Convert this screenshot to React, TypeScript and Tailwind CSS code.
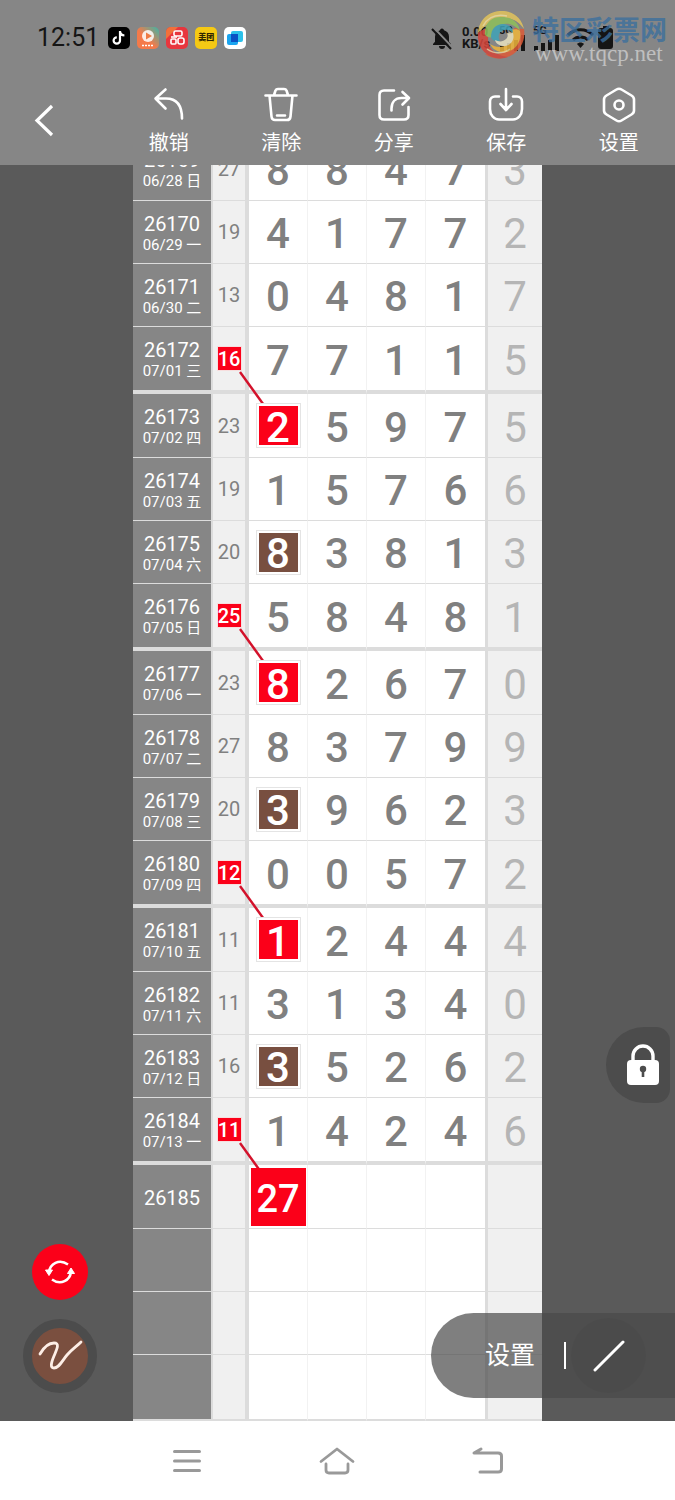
import type { ReactNode } from 'react';
import clsx from 'clsx';

interface Draw {
    issue: string;
    date?: string;
    sum?: number;
    digits: string;
    tail?: string;
    sumMarked?: boolean;
    mark?: 'red' | 'brown' | 'pick';
}

const draws: Draw[] = [
    { issue: '26169', date: '06/28 日', sum: 27, digits: '8847', tail: '3' },
    { issue: '26170', date: '06/29 一', sum: 19, digits: '4177', tail: '2' },
    { issue: '26171', date: '06/30 二', sum: 13, digits: '0481', tail: '7' },
    { issue: '26172', date: '07/01 三', sum: 16, digits: '7711', tail: '5', sumMarked: true },
    { issue: '26173', date: '07/02 四', sum: 23, digits: '2597', tail: '5', mark: 'red' },
    { issue: '26174', date: '07/03 五', sum: 19, digits: '1576', tail: '6' },
    { issue: '26175', date: '07/04 六', sum: 20, digits: '8381', tail: '3', mark: 'brown' },
    { issue: '26176', date: '07/05 日', sum: 25, digits: '5848', tail: '1', sumMarked: true },
    { issue: '26177', date: '07/06 一', sum: 23, digits: '8267', tail: '0', mark: 'red' },
    { issue: '26178', date: '07/07 二', sum: 27, digits: '8379', tail: '9' },
    { issue: '26179', date: '07/08 三', sum: 20, digits: '3962', tail: '3', mark: 'brown' },
    { issue: '26180', date: '07/09 四', sum: 12, digits: '0057', tail: '2', sumMarked: true },
    { issue: '26181', date: '07/10 五', sum: 11, digits: '1244', tail: '4', mark: 'red' },
    { issue: '26182', date: '07/11 六', sum: 11, digits: '3134', tail: '0' },
    { issue: '26183', date: '07/12 日', sum: 16, digits: '3526', tail: '2', mark: 'brown' },
    { issue: '26184', date: '07/13 一', sum: 11, digits: '1424', tail: '6', sumMarked: true },
    { issue: '26185', digits: '', mark: 'pick' },
    { issue: '', digits: '' },
    { issue: '', digits: '' },
    { issue: '', digits: '' },
];

const Signal = () => (
    <div className="relative h-[26px] w-[27px]">
        <span className="absolute left-0 top-0 text-[11px] leading-3 font-bold">5G</span>
        <svg className="absolute bottom-0 left-0" width="27" height="16" viewBox="0 0 27 16" fill="currentColor">
            <rect x="1" y="11" width="4" height="5" />
            <rect x="8" y="8" width="4" height="8" />
            <rect x="15" y="5" width="4" height="11" />
            <rect x="22" y="0" width="4" height="16" />
        </svg>
    </div>
);

const AppBadges = () => (
    <div className="ml-[9px] flex gap-[7px]">
        <svg width="22" height="22" viewBox="0 0 22 22">
            <rect width="22" height="22" rx="5" fill="#000" />
            <path d="M12 4v9.500a3.200 3.200 0 1 1-3.200-3.200M12 4.500c.4 2.500 2 3.800 4.400 4" fill="none" stroke="#fff" strokeWidth="2.200" />
        </svg>
        <svg width="22" height="22" viewBox="0 0 22 22">
            <defs>
                <linearGradient id="video" x1="0" y1="1" x2="1" y2="0">
                    <stop offset=".45" stopColor="#f47a4a" />
                    <stop offset="1" stopColor="#3bb6a8" />
                </linearGradient>
            </defs>
            <rect width="22" height="22" rx="5" fill="url(#video)" />
            <circle cx="11" cy="9" r="6" fill="#fff" opacity=".85" />
            <path d="M9 5.500l6 3.500-6 3.500z" fill="#ee7b45" />
            <path d="M5 18.500h12" stroke="#fff" strokeWidth="1.500" strokeDasharray="2 1" />
        </svg>
        <svg width="22" height="22" viewBox="0 0 22 22">
            <rect width="22" height="22" rx="5" fill="#e8363e" />
            <path d="M0 12V5a5 5 0 0 1 5-5h7z" fill="#f2703a" />
            <g fill="none" stroke="#fff" strokeWidth="1.600">
                <rect x="8" y="4" width="8" height="5" rx="1.500" />
                <rect x="5" y="12" width="5" height="5" rx="1" />
                <rect x="12" y="11" width="6" height="6" rx="2" />
                <path d="M5 10h6" />
            </g>
        </svg>
        <div className="flex h-[22px] w-[22px] items-center justify-center rounded-[5px] bg-[#f5c914] text-[8px] leading-none font-black text-[#302600]">美团</div>
        <svg width="22" height="22" viewBox="0 0 22 22">
            <rect width="22" height="22" rx="5" fill="#fff" />
            <rect x="7" y="4" width="12" height="11" rx="2" fill="#2bc1ea" />
            <rect x="3" y="7" width="11" height="11" rx="2" fill="#1aa5f0" />
            <rect x="7" y="7" width="7" height="8" fill="#0a52c4" />
        </svg>
    </div>
);

const Watermark = () => (
    <div className="pointer-events-none absolute top-[9px] left-[475px] flex">
        <svg width="52" height="52" viewBox="0 0 52 52" fill="none" opacity=".85">
            <path d="M3 24C4 10 14 2 27 2c12 0 20 8 22 18-6-9-14-12-23-10C15 11 10 17 3 24z" fill="#e2c45c" />
            <path d="M49 20c2 12-4 22-14 27-9 4-18 3-25-2 10 1 20 0 26-7 5-6 5-12 3-19z" fill="#dd5b38" />
            <path d="M3 24c-1 11 4 19 12 23 6 3 13 3 18 1-9-1-16-5-19-12-2-6-1-12 3-18C11 19 6 21 3 24z" fill="#d4453a" />
            <path d="M10 26C9 14 17 7 27 8c10 0 17 6 18 14-6-7-13-9-20-6-5 2-7 7-7 12-3 1-6 0-8-2z" fill="#8fc05a" />
            <path d="M45 22c2 10-4 19-13 21-8 1-14-2-17-8 6 4 13 4 18 0s5-9 3-14c4-1 7-1 9 1z" fill="#efb53c" />
            <path d="M16 28c0-8 5-13 12-13 6 0 10 4 10 9-4-4-8-4-11-2-4 2-4 7-2 10-4 1-8 0-9-4z" fill="#3fa3b8" />
            <path d="M38 24c2 7-2 12-8 13-5 0-9-2-10-6 4 2 8 2 11-1 2-2 2-4 1-6 2-1 4-1 6 0z" fill="#e9e2c0" />
            <path d="M8 17C13 8 22 5 32 7M12 40c7 5 16 5 23 0" stroke="#f3e4b0" strokeWidth="1.500" opacity=".8" />
        </svg>
        <div className="ml-[5px] pt-[5px]">
            <div className="text-[27px] leading-[34px] font-bold text-[#3b6f9e]/80">特区彩票网</div>
            <div className="-mt-[4px] pl-[3px] font-['Liberation_Serif',serif] text-[23px] leading-5 text-[#cfcfcf]/80">www.tqcp.net</div>
        </div>
    </div>
);

const StatusBar = () => (
    <div className="flex h-[75px] items-center pr-[62px] pl-[37px] text-[#151515]">
        <span className="text-[25px]">12:51</span>
        <AppBadges />
        <div className="ml-auto flex items-center">
            <svg width="24" height="24" viewBox="0 0 24 24">
                <path d="M12 2.500a2 2 0 0 1 2 1.700c3 .8 5 3.300 5 6.500v5l2 2.300v1H3v-1l2-2.300v-5c0-3.200 2-5.700 5-6.500a2 2 0 0 1 2-1.700zM9 20h6a3 3 0 0 1-6 0z" fill="currentColor" />
                <path d="M3.500 1.500l19 20" stroke="#868686" strokeWidth="2" />
                <path d="M2 3l19 20" stroke="currentColor" strokeWidth="2" />
            </svg>
            <div className="ml-[8px] w-[37px] text-[13px] leading-3 font-bold">
                <div>0.00</div>
                <div>KB/s</div>
            </div>
            <Signal />
            <div className="ml-[7px]">
                <Signal />
            </div>
            <svg className="ml-[6px]" width="29" height="24" viewBox="0 0 29 24" fill="none" stroke="currentColor" strokeWidth="3">
                <path d="M2 9c7-7 18-7 25 0M7 14c4-4 11-4 15 0" />
                <path d="M11 18c2-2 5-2 7 0l-3.500 4z" fill="currentColor" stroke="none" />
            </svg>
            <svg className="ml-[3px]" width="15" height="24" viewBox="0 0 15 24" fill="currentColor">
                <path d="M5 0h6v2h1a3 3 0 0 1 3 3v15a3 3 0 0 1-3 3H3a3 3 0 0 1-3-3V5a3 3 0 0 1 3-3h2z" />
            </svg>
        </div>
    </div>
);

const ToolButton = ({ label, children }: { label: string; children: ReactNode }) => (
    <button className="flex flex-col items-center pt-[11px] text-white">
        <svg width="38" height="38" viewBox="0 0 38 38" fill="none" stroke="currentColor" strokeWidth="2.600" strokeLinecap="round" strokeLinejoin="round">
            {children}
        </svg>
        <span className="mt-[7px] text-[20px] leading-6">{label}</span>
    </button>
);

const Toolbar = () => (
    <div className="grid h-[90px] grid-cols-6">
        <button aria-label="返回" className="flex items-center pl-[34px] text-white">
            <svg width="22" height="34" viewBox="0 0 22 34" fill="none" stroke="currentColor" strokeWidth="3.200">
                <path d="M18 3L3 17.500 18 32" />
            </svg>
        </button>
        <ToolButton label="撤销">
            <path d="M15.500 3.500L5.500 12.500l10 10M6 12.500h10c10 0 16 6 16 20" />
        </ToolButton>
        <ToolButton label="清除">
            <path d="M3.500 9.500h31M7.500 9.500l2 21c.2 2 1.300 3.500 3.500 3.500h12c2.200 0 3.300-1.500 3.500-3.500l2-21M12 9l1.500-4.500C14 3.300 14.700 3 16 3h6c1.300 0 2 .3 2.500 1.500L26 9M15 29.500h8" />
        </ToolButton>
        <ToolButton label="分享">
            <path d="M19 4.500H9c-3 0-4.500 1.500-4.500 4.500v20c0 3 1.500 4.500 4.500 4.500h20c3 0 4.500-1.500 4.500-4.500v-8M16.500 24.500v-2c0-6 3.500-10.500 10-10.500h7M27.500 6l6.500 6-6.500 6.500" />
        </ToolButton>
        <ToolButton label="保存">
            <path d="M19 3v20M13.500 18l5.500 6 5.500-6M12 10.500H8c-3 0-5 2-5 5V23c0 6 4 10.500 9 10.500h14c5 0 9-4.500 9-10.500v-7.500c0-3-2-5-5-5h-4" />
        </ToolButton>
        <ToolButton label="设置">
            <path d="M16.500 3.500c1.700-1 3.300-1 5 0l10 6c1.700 1 2.500 2.300 2.500 4v11c0 1.700-.8 3-2.500 4l-10 6c-1.700 1-3.300 1-5 0l-10-6C4.800 27.500 4 26.200 4 24.500v-11c0-1.700.8-3 2.500-4z" />
            <circle cx="19" cy="19" r="4.500" />
        </ToolButton>
    </div>
);

const Mark = ({ type, digit }: { type?: Draw['mark']; digit: string }) => {
    if (!type) return <div className="pt-1">{digit}</div>;
    if (type === 'pick') {
        return (
            <span className="relative z-20 mx-auto flex h-[58px] w-[55px] items-center justify-center bg-[#fb0019] pt-1 text-[38px] text-white">27</span>
        );
    }
    return (
        <span className="relative z-20 mx-auto block w-[45px] border border-[#e4e4e4] bg-white p-[2px]">
            <span className={clsx('flex h-[39px] items-center justify-center pt-1 text-white', type === 'red' ? 'bg-[#fb0019]' : 'bg-[#784f40]')}>
                {digit}
            </span>
        </span>
    );
};

const TrendTable = () => (
    <table className="-mt-7 w-full table-fixed border-separate border-spacing-0 text-center text-[#808080]">
        <colgroup>
            <col className="w-[80px]" />
            <col className="w-[36px]" />
            <col span={4} />
            <col className="w-[57px]" />
        </colgroup>
        <tbody>
            {draws.map((row, i) => {
                const isLast = i === draws.length - 1;
                const groupEnd = i % 4 === 3;
                const line = clsx('border-[#dcdcdc]', isLast ? 'border-b-2' : groupEnd ? 'border-b-4' : 'border-b');
                const height = isLast ? 'h-[66px]' : groupEnd ? 'h-[67px]' : i % 4 === 0 ? 'h-[64px]' : 'h-[63px]';
                return (
                    <tr key={i}>
                        <th className={clsx('border-r-2 bg-[#868686] p-0 font-normal text-white', line, height)}>
                            <div className="pt-1 text-[20px] leading-[21px]">{row.issue}</div>
                            {row.date && <div className="text-[15px] leading-5">{row.date}</div>}
                        </th>
                        <td className={clsx('border-r-4 bg-[#f0f0f0] p-0 text-[20px]', line, row.sumMarked && 'relative z-10')}>
                            {row.sumMarked ? (
                                <>
                                    <span className="mx-auto flex h-[23px] w-[23px] items-center justify-center bg-[#fb0019] font-medium text-white outline outline-[#f7dede]">
                                        {row.sum}
                                    </span>
                                    <svg className="absolute top-[44px] left-[26px]" width="28" height="38" viewBox="0 0 28 38">
                                        <path d="M1 1l26 36" stroke="#d3122b" strokeWidth="2.400" />
                                    </svg>
                                </>
                            ) : (
                                row.sum
                            )}
                        </td>
                        {[0, 1, 2, 3].map((col) => (
                            <td
                                key={col}
                                className={clsx('bg-white p-0 text-[42px] leading-none font-medium', line, col < 3 && 'border-r border-r-[#f2f2f2]')}
                            >
                                <Mark type={col === 0 ? row.mark : undefined} digit={row.digits[col] ?? ''} />
                            </td>
                        ))}
                        <td className={clsx('border-l-3 bg-[#f0f0f0] p-0 text-[42px] leading-none text-[#b5b5b5]', line)}>
                            <div className="pt-1">{row.tail}</div>
                        </td>
                    </tr>
                );
            })}
        </tbody>
    </table>
);

const FloatingTools = () => (
    <>
        <button aria-label="锁定" className="absolute right-[5px] bottom-[318px] flex h-[76px] w-[64px] items-center rounded-l-[38px] rounded-r-[14px] bg-[#4c4c4c] pl-[20px]">
            <svg width="34" height="42" viewBox="0 0 34 42">
                <path d="M7 18v-6a10 10 0 0 1 20 0v6" fill="none" stroke="#fff" strokeWidth="3.400" />
                <rect x="1" y="16" width="32" height="25" rx="4" fill="#fff" />
                <circle cx="17" cy="25" r="3.200" fill="#4c4c4c" />
                <path d="M17 26v7" stroke="#4c4c4c" strokeWidth="2.600" />
            </svg>
        </button>
        <div className="absolute bottom-[28px] left-[23px] flex w-[74px] flex-col items-center gap-[19px]">
            <button aria-label="切换" className="flex h-14 w-14 items-center justify-center rounded-full bg-[#fb0019]">
                <svg width="32" height="28" viewBox="0 0 32 28" fill="none" stroke="#fff" strokeWidth="2.500">
                    <path d="M5 14C6 6 15 0 24 6.500M27 14c-1 8-10 14-19 7.500" />
                    <path d="M1.500 12h7L5 17.500zM23.500 15.500h7L27 10z" fill="#fff" strokeWidth="1" strokeLinejoin="round" />
                </svg>
            </button>
            <button aria-label="画笔" className="flex h-[74px] w-[74px] items-center justify-center rounded-full border-[9px] border-[#4c4c4c] bg-[#7a4f3f]">
                <svg width="46" height="32" viewBox="0 0 46 32" className="shrink-0" fill="none" stroke="#fdeee6" strokeWidth="2.800" strokeLinecap="round">
                    <path d="M3 14C7 7 12 3 17 3c6 0 3 6 0 13-3 7-4 12 0 12 5 0 8-7 13-13s10-9 14-13" />
                </svg>
            </button>
        </div>
        <div className="absolute right-0 bottom-[23px] flex h-[85px] items-center rounded-l-full bg-[#484848]/70 pr-[29px] pl-[54px] text-white">
            <button className="text-[25px]">设置</button>
            <span className="ml-[29px] h-[27px] w-[2px] bg-white" />
            <button aria-label="直线" className="ml-[5px] flex h-[75px] w-[75px] items-center justify-center rounded-full bg-black/3">
                <svg width="34" height="32" viewBox="0 0 34 32">
                    <path d="M3 30L31 2" stroke="#fff" strokeWidth="3" strokeLinecap="round" />
                </svg>
            </button>
        </div>
    </>
);

const NavBar = () => (
    <nav className="flex h-[79px] items-center bg-white px-28 text-[#999999]">
        <button aria-label="菜单" className="flex flex-1 justify-center">
            <svg width="34" height="30" viewBox="0 0 34 30" fill="none" stroke="currentColor" strokeWidth="3" strokeLinecap="round">
                <path d="M4.500 5.500h25M4.500 15h25M4.500 24.500h25" />
            </svg>
        </button>
        <button aria-label="主页" className="flex flex-1 justify-center">
            <svg width="38" height="30" viewBox="0 0 38 30" fill="none" stroke="currentColor" strokeWidth="2.800" strokeLinecap="round" strokeLinejoin="round">
                <path d="M3 15.500L19 3l16 12.500M8 18v6c0 2 1 3 3 3h16c2 0 3-1 3-3v-6" />
            </svg>
        </button>
        <button aria-label="后退" className="flex flex-1 justify-center">
            <svg width="34" height="30" viewBox="0 0 34 30" fill="none" stroke="currentColor" strokeWidth="3" strokeLinecap="round" strokeLinejoin="round">
                <path d="M10 3L3 7h24c2.500 0 3.500 1 3.500 3v13c0 2-1 3-3.500 3H9" />
            </svg>
        </button>
    </nav>
);

const App = () => (
    <div className="flex min-h-screen flex-col bg-white font-['Roboto','Noto_Sans_CJK_SC',sans-serif]">
        <header className="relative z-30 bg-[#868686]">
            <StatusBar />
            <Watermark />
            <Toolbar />
        </header>
        <main className="relative flex-1 overflow-hidden bg-[#5a5a5a] px-[133px]">
            <TrendTable />
            <div className="absolute inset-0 z-30">
                <FloatingTools />
            </div>
        </main>
        <NavBar />
    </div>
);

export default App;
